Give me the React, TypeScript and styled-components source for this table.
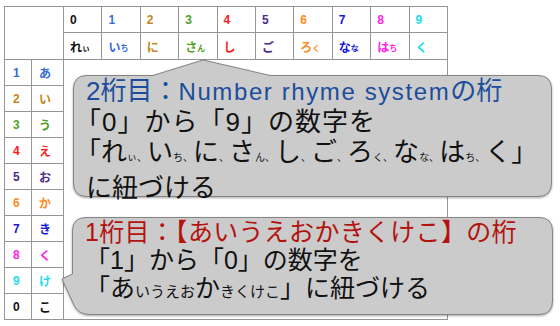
import React from 'react';
import styled, {createGlobalStyle} from 'styled-components';

const GlobalStyle = createGlobalStyle`
  html, body {
    margin: 0;
    padding: 0;
    background: #fff;
  }
  body {
    font-family: "Liberation Sans", "Noto Sans CJK JP", sans-serif;
  }
`;

const Stage = styled.div`
  position: relative;
  width: 560px;
  height: 326px;
  overflow: hidden;
  box-sizing: border-box;
  padding: 6px 0 0 4px;
`;

const Table = styled.div`
  display: grid;
  grid-template-columns: 26px 31px repeat(10, 37.4px);
  grid-template-rows: 25px 26px repeat(10, 25px);
  gap: 1px;
  width: fit-content;
  background: #959595;
  border: 1px solid #959595;
`;

const Blank = styled.div<{ $area: string }>`
  grid-area: ${p => p.$area};
  background: #fff;
`;

const Cell = styled.div<{ $color: string; $pad?: number }>`
  display: flex;
  align-items: center;
  background: #fff;
  padding-left: ${p => p.$pad ?? 6}px;
  font-size: 12px;
  font-weight: bold;
  color: ${p => p.$color};
  white-space: nowrap;
`;

const Tiny = styled.span`
  font-size: 8px;
  margin-top: 3px;
`;

const Bubble = styled.div<{ $left: number; $top: number; $w: number; $h: number }>`
  position: absolute;
  left: ${p => p.$left}px;
  top: ${p => p.$top}px;
  width: ${p => p.$w}px;
  height: ${p => p.$h}px;
`;

const Shape = styled.svg`
  position: absolute;
  left: 0;
  top: 0;
  overflow: visible;
  filter: drop-shadow(0 1px 1px rgba(0, 0, 0, 0.35));
`;

const Text = styled.div<{ $lh: number; $size: number }>`
  position: relative;
  display: flex;
  flex-direction: column;
  padding: 1px 0 0 13px;
  font-size: ${p => p.$size}px;
  line-height: ${p => p.$lh}px;
  color: #111;
  white-space: nowrap;
`;

const Line = styled.div<{ $color?: string; $hang?: boolean; $spacing?: number }>`
  color: ${p => p.$color ?? 'inherit'};
  margin-left: ${p => (p.$hang ? '-11px' : '0')};
  letter-spacing: ${p => p.$spacing ?? 0}px;
`;

const Small = styled.span<{ $size: number }>`
  font-size: ${p => p.$size}px;
`;

const Latin = styled.span`
  font-size: 24px;
  letter-spacing: 1.6px;
`;

const colors: Record<string, string> = {
  '0': '#111111',
  '1': '#3a6cd6',
  '2': '#c2861b',
  '3': '#52a12c',
  '4': '#ff1a1a',
  '5': '#4b2d8c',
  '6': '#ff8a24',
  '7': '#1414dc',
  '8': '#ff22ea',
  '9': '#1edcec',
};

const header: [string, string, string][] = [
  ['0', 'れ', 'ぃ'],
  ['1', 'い', 'ち'],
  ['2', 'に', ''],
  ['3', 'さ', 'ん'],
  ['4', 'し', ''],
  ['5', 'ご', ''],
  ['6', 'ろ', 'く'],
  ['7', 'な', 'な'],
  ['8', 'は', 'ち'],
  ['9', 'く', ''],
];

const side: [string, string][] = [
  ['1', 'あ'],
  ['2', 'い'],
  ['3', 'う'],
  ['4', 'え'],
  ['5', 'お'],
  ['6', 'か'],
  ['7', 'き'],
  ['8', 'く'],
  ['9', 'け'],
  ['0', 'こ'],
];

function App() {
  return (
    <Stage>
      <GlobalStyle/>
      <Table>
        <Blank $area="1 / 1 / 3 / 3"/>
        <Blank $area="3 / 3 / 13 / 13"/>
        {header.map(([d]) => <Cell key={'d' + d} $color={colors[d]}>{d}</Cell>)}
        {header.map(([d, big, small]) => (
          <Cell key={'k' + d} $color={colors[d]}>
            {big}{small && <Tiny>{small}</Tiny>}
          </Cell>
        ))}
        {side.map(([d, kana]) => (
          <React.Fragment key={'s' + d}>
            <Cell $color={colors[d]} $pad={8}>{d}</Cell>
            <Cell $color={colors[d]} $pad={7}>{kana}</Cell>
          </React.Fragment>
        ))}
      </Table>

      <Bubble $left={73} $top={75} $w={479} $h={122}>
        <Shape width={479} height={122}>
          <path
            d="M14 0.5 H80 L130 -15 L197 0.5 H465 Q478.5 0.5 478.5 14 V108 Q478.5 121.5 465 121.5 H14 Q0.5 121.5 0.5 108 V14 Q0.5 0.5 14 0.5 Z"
            fill="#cbcbcb" stroke="#858585" strokeWidth={1}/>
        </Shape>
        <Text $lh={30} $size={26}>
          <Line $color="#1c4d9c">2桁目：<Latin>Number rhyme system</Latin>の桁</Line>
          <Line $hang $spacing={1}>「0」から「9」の数字を</Line>
          <Line $hang>
            「れ<Small $size={10}>ぃ、</Small>い<Small $size={10}>ち、</Small>に<Small $size={10}>、</Small>さ<Small $size={10}>ん、</Small>し<Small $size={10}>、</Small>ご<Small $size={10}>、</Small>ろ<Small $size={10}>く、</Small>な<Small $size={10}>な、</Small>は<Small $size={10}>ち、</Small>く」
          </Line>
          <Line>に紐づける</Line>
        </Text>
      </Bubble>

      <Bubble $left={72} $top={217} $w={481} $h={98}>
        <Shape width={481} height={98}>
          <path
            d="M14 0.5 H467 Q480.5 0.5 480.5 14 V84 Q480.5 97.5 467 97.5 H18 Q6 97.5 2 88 L-10 62 L0.5 57 V14 Q0.5 0.5 14 0.5 Z"
            fill="#cbcbcb" stroke="#858585" strokeWidth={1}/>
        </Shape>
        <Text $lh={28} $size={25}>
          <Line $color="#b3130f" $spacing={0.3}>1桁目：【あいうえおかきくけこ】の桁</Line>
          <Line>「1」から「0」の数字を</Line>
          <Line>
            「あ<Small $size={15}>いうえお</Small>か<Small $size={15}>きくけこ</Small>」に紐づける
          </Line>
        </Text>
      </Bubble>
    </Stage>
  );
}

export default App;
